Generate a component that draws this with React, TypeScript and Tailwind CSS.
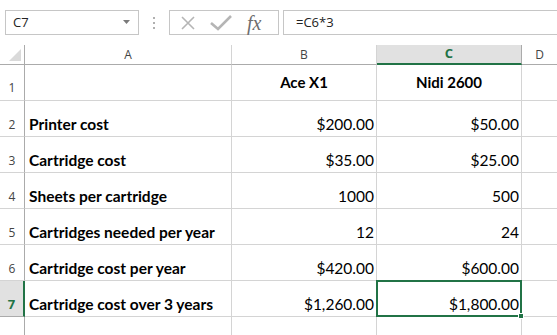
import React from 'react';

const rows = [
    { n: 2, label: 'Printer cost', b: '$200.00', c: '$50.00' },
    { n: 3, label: 'Cartridge cost', b: '$35.00', c: '$25.00' },
    { n: 4, label: 'Sheets per cartridge', b: '1000', c: '500' },
    { n: 5, label: 'Cartridges needed per year', b: '12', c: '24' },
    { n: 6, label: 'Cartridge cost per year', b: '$420.00', c: '$600.00' },
    { n: 7, label: 'Cartridge cost over 3 years', b: '$1,260.00', c: '$1,800.00' },
];

const cellFont = { fontFamily: 'Lato, "Liberation Sans", sans-serif' };
const uiFont = { fontFamily: '"Open Sans", "Noto Sans", sans-serif' };

function Toolbar() {
    return (
        <div className="flex items-center h-[45px] pt-[10px] pb-[10px] pl-[5px]">
            {/* name box */}
            <div className="flex items-center justify-between w-[134px] h-[25px] border border-[#c6c6c6] pl-[7px] pr-[7px]">
                <span className="text-[13px] text-[#222]" style={uiFont}>C7</span>
                <svg width="8" height="5" viewBox="0 0 8 5">
                    <path d="M0 0 H7 L3.5 4 Z" fill="#7a7a7a" />
                </svg>
            </div>
            {/* grip */}
            <div className="flex flex-col gap-[3px] ml-[14px] mr-[14px]">
                <span className="w-[2px] h-[2px] bg-[#b0b0b0]" />
                <span className="w-[2px] h-[2px] bg-[#b0b0b0]" />
                <span className="w-[2px] h-[2px] bg-[#b0b0b0]" />
            </div>
            {/* formula buttons */}
            <div className="flex items-center w-[110px] h-[25px] border border-[#c6c6c6] pl-[10px] gap-[14px]">
                <svg width="16" height="16" viewBox="0 0 16 16">
                    <path d="M2 2 L14 14 M14 2 L2 14" stroke="#b5b5b5" strokeWidth="1.6" />
                </svg>
                <svg width="22" height="16" viewBox="0 0 22 16">
                    <path d="M1 8 L8 14 L21 1" stroke="#b5b5b5" strokeWidth="2.6" fill="none" />
                </svg>
                <span
                    className="ml-[1px] text-[20px] italic text-[#6e6e6e] leading-none"
                    style={{ fontFamily: '"Liberation Serif", serif' }}
                >
                    fx
                </span>
            </div>
            {/* formula input */}
            <div className="flex items-center flex-1 h-[25px] ml-[4px] border border-[#c6c6c6] border-r-0 pl-[12px]">
                <span className="text-[13px] text-[#222]" style={uiFont}>=C6*3</span>
            </div>
        </div>
    );
}

export default function App() {
    return (
        <div className="w-[557px] h-[335px] overflow-hidden bg-white">
            <Toolbar />
            <div className="grid grid-cols-[25px_207px_145px_145px_35px] grid-rows-[20px_36px_36px_36px_36px_36px_36px_36px_36px]">
                {/* column header row */}
                <div className="relative border-r border-b border-[#ababab]">
                    <svg className="absolute right-[3px] bottom-[3px]" width="12" height="12" viewBox="0 0 12 12">
                        <path d="M12 0 V12 H0 Z" fill="#dadada" />
                    </svg>
                </div>
                <div className="flex items-center justify-center border-r border-b border-r-[#d4d4d4] border-b-[#ababab] text-[12px] text-[#444]" style={uiFont}>A</div>
                <div className="flex items-center justify-center border-r border-b border-r-[#d4d4d4] border-b-[#ababab] text-[12px] text-[#444]" style={uiFont}>B</div>
                <div className="flex items-center justify-center bg-[#e1e1e1] border-r border-r-[#ababab] border-b-2 border-b-[#217346] text-[13px] font-bold text-[#217346]" style={uiFont}>C</div>
                <div className="flex items-center justify-center border-b border-[#ababab] text-[12px] text-[#444]" style={uiFont}>D</div>

                {/* row 1 */}
                <div className="flex items-end justify-center pb-[3px] border-r border-b border-r-[#ababab] border-b-[#d4d4d4] text-[12px] text-[#444]" style={uiFont}>1</div>
                <div className="border-r border-b border-[#d4d4d4]" />
                <div className="flex items-center justify-center border-r border-b border-[#d4d4d4] text-[15px] font-bold text-black" style={cellFont}>Ace X1</div>
                <div className="flex items-center justify-center border-r border-b border-[#d4d4d4] text-[15px] font-bold text-black" style={cellFont}>Nidi 2600</div>
                <div className="border-b border-[#d4d4d4]" />

                {rows.map((r) => {
                    const sel = r.n === 7;
                    return (
                        <React.Fragment key={r.n}>
                            <div
                                className={
                                    sel
                                        ? 'flex items-end justify-center pb-[2px] bg-[#e1e1e1] border-r-2 border-b border-r-[#217346] border-b-[#ababab] text-[13px] font-bold text-[#217346]'
                                        : 'flex items-end justify-center pb-[2px] border-r border-b border-r-[#ababab] border-b-[#d4d4d4] text-[12px] text-[#444]'
                                }
                                style={uiFont}
                            >
                                {r.n}
                            </div>
                            <div className="flex items-end pl-[4px] border-r border-b border-[#d4d4d4] text-[15.5px] font-bold text-black whitespace-nowrap" style={cellFont}>
                                {r.label}
                            </div>
                            <div className="flex items-end justify-end pr-[2px] border-r border-b border-[#d4d4d4] text-[15.5px] text-black" style={cellFont}>
                                {r.b}
                            </div>
                            <div className="relative flex items-end justify-end pr-[2px] border-r border-b border-[#d4d4d4] text-[15.5px] text-black" style={cellFont}>
                                {r.c}
                                {sel && (
                                    <>
                                        <div className="absolute left-[-1px] top-[-1px] right-[-1px] bottom-[-1px] border-2 border-[#217346]" />
                                        <div className="absolute right-[-3px] bottom-[-3px] w-[6px] h-[6px] bg-[#217346] border border-white" />
                                    </>
                                )}
                            </div>
                            <div className="border-b border-[#d4d4d4]" />
                        </React.Fragment>
                    );
                })}

                {/* row 8 (partial) */}
                <div className="border-r border-[#ababab]" />
                <div className="border-r border-[#d4d4d4]" />
                <div className="border-r border-[#d4d4d4]" />
                <div className="border-r border-[#d4d4d4]" />
                <div />
            </div>
        </div>
    );
}
